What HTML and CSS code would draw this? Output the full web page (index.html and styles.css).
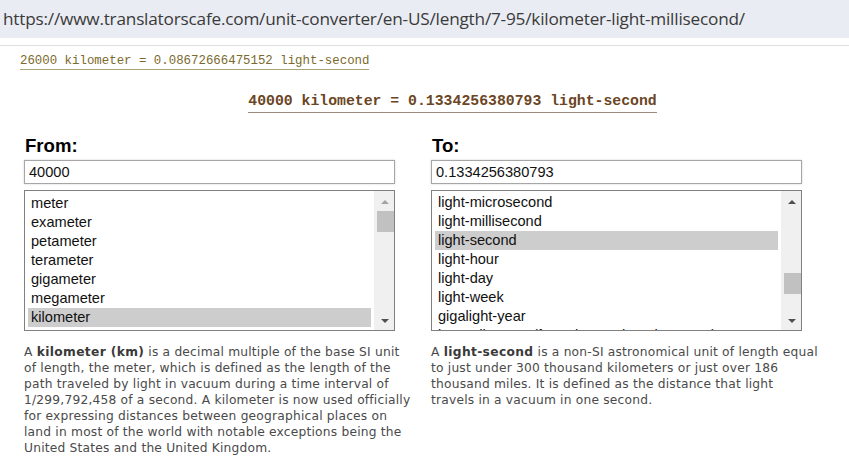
FILE: index.html
```html
<!DOCTYPE html>
<html lang="en">
<head>
<meta charset="utf-8">
<title>kilometer to light-second</title>
<link rel="stylesheet" href="styles.css">
</head>
<body>
<div class="urlbar">https://www.translatorscafe.com/unit-converter/en-US/length/7-95/kilometer-light-millisecond/</div>
<div class="divider"></div>

<div class="result-prev"><span>26000 kilometer = 0.08672666475152 light-second</span></div>
<div class="result-main"><span>40000 kilometer = 0.1334256380793 light-second</span></div>

<div class="converter">
  <section class="col">
    <h2 class="label">From:</h2>
    <div class="field">40000</div>
    <div class="listbox">
      <ul class="options">
        <li>meter</li>
        <li>exameter</li>
        <li>petameter</li>
        <li>terameter</li>
        <li>gigameter</li>
        <li>megameter</li>
        <li class="selected">kilometer</li>
      </ul>
      <div class="scrollbar">
        <span class="arrow up dim"></span>
        <div class="track"><div class="thumb thumb-from"></div></div>
        <span class="arrow down"></span>
      </div>
    </div>
    <p class="desc">A <b>kilometer (km)</b> is a decimal multiple of the base SI unit of length, the meter, which is defined as the length of the path traveled by light in vacuum during a time interval of 1/299,792,458 of a second. A kilometer is now used officially for expressing distances between geographical places on land in most of the world with notable exceptions being the United States and the United Kingdom.</p>
  </section>

  <section class="col">
    <h2 class="label">To:</h2>
    <div class="field">0.1334256380793</div>
    <div class="listbox">
      <ul class="options options-to">
        <li>light-microsecond</li>
        <li>light-millisecond</li>
        <li class="selected">light-second</li>
        <li>light-hour</li>
        <li>light-day</li>
        <li>light-week</li>
        <li>gigalight-year</li>
        <li>lunar distance (from the Earth to the Moon)</li>
      </ul>
      <div class="scrollbar">
        <span class="arrow up"></span>
        <div class="track"><div class="thumb thumb-to"></div></div>
        <span class="arrow down"></span>
      </div>
    </div>
    <p class="desc">A <b>light-second</b> is a non-SI astronomical unit of length equal to just under 300 thousand kilometers or just over 186 thousand miles. It is defined as the distance that light travels in a vacuum in one second.</p>
  </section>
</div>
</body>
</html>
```

FILE: styles.css
```css
* { box-sizing: border-box; }

html, body {
  margin: 0;
  padding: 0;
  background: #fff;
}

body {
  width: 849px;
  height: 471px;
  overflow: hidden;
  font-family: "Liberation Sans", Arial, sans-serif;
}

/* address strip */
.urlbar {
  height: 38px;
  background: #e9ecf3;
  color: #3a3a3a;
  font-family: "Open Sans", "Noto Sans", sans-serif;
  font-size: 17.2px;
  letter-spacing: -0.2px;
  line-height: 38px;
  padding-left: 3px;
  white-space: nowrap;
}

.divider {
  height: 1px;
  margin-top: 7px;
  background: #dedede;
}

/* conversion results */
.result-prev {
  padding: 8px 0 0 20px;
  font-family: "Liberation Mono", "DejaVu Sans Mono", monospace;
  font-size: 12.4px;
  line-height: 14px;
  color: #7a6a2c;
}
.result-prev span {
  display: inline-block;
  border-bottom: 1px solid #a9a27a;
  padding-bottom: 1px;
}

.result-main {
  padding: 23px 0 0 56px;
  text-align: center;
  font-family: "Liberation Mono", "DejaVu Sans Mono", monospace;
  font-weight: bold;
  font-size: 14.8px;
  line-height: 17px;
  color: #6b4524;
}
.result-main span {
  display: inline-block;
  border-bottom: 1px solid #9c8b7c;
  padding-bottom: 2px;
}

/* two converter columns */
.converter {
  display: grid;
  grid-template-columns: 395px 395px;
  column-gap: 12px;
  padding: 0 0 0 24px;
  margin-top: 21px;
}

.col { min-width: 0; }

.label {
  margin: 0 0 0 1px;
  font-size: 18.6px;
  font-weight: bold;
  line-height: 24px;
  color: #000;
}

.field {
  width: 371px;
  height: 24px;
  margin-top: 2px;
  border: 1px solid #a6a6a6;
  box-shadow: 0 0 2px rgba(0, 0, 0, 0.18);
  padding-left: 4px;
  font-size: 14.6px;
  line-height: 22px;
  color: #111;
  background: #fff;
}

.listbox {
  display: flex;
  width: 371px;
  height: 141px;
  margin-top: 6px;
  border: 1px solid #808080;
  background: #fff;
}

.options {
  flex: 1;
  list-style: none;
  margin: 0;
  padding: 3px 3px 0 3px;
  overflow: hidden;
  font-size: 14.6px;
  color: #111;
}
.options-to { padding-top: 2px; }

.options li {
  height: 19px;
  line-height: 19px;
  padding-left: 3px;
  white-space: nowrap;
}
.options li.selected { background: #cdcdcd; }

/* scrollbar column */
.scrollbar {
  width: 20px;
  background: #f0f0f0;
  display: flex;
  flex-direction: column;
  align-items: center;
  padding: 9px 0 7px 2px;
}
.track {
  flex: 1;
  width: 17px;
}
.thumb {
  width: 17px;
  height: 21px;
  background: #c1c1c1;
}
.thumb-from { margin-top: 7px; }
.thumb-to { margin-top: 69px; }

.arrow {
  width: 0;
  height: 0;
  border-left: 4px solid transparent;
  border-right: 4px solid transparent;
}
.arrow.up { border-bottom: 4px solid #505050; }
.arrow.up.dim { border-bottom-color: #a3a3a3; }
.arrow.down { border-top: 4px solid #505050; }

/* unit descriptions */
.desc {
  width: 389px;
  margin: 13px 0 0 0;
  font-family: "DejaVu Sans", Verdana, sans-serif;
  font-size: 12.25px;
  letter-spacing: 0.2px;
  line-height: 16px;
  color: #4a4a4a;
}
.desc b {
  color: #3a3a3a;
  letter-spacing: 0.35px;
}
```
